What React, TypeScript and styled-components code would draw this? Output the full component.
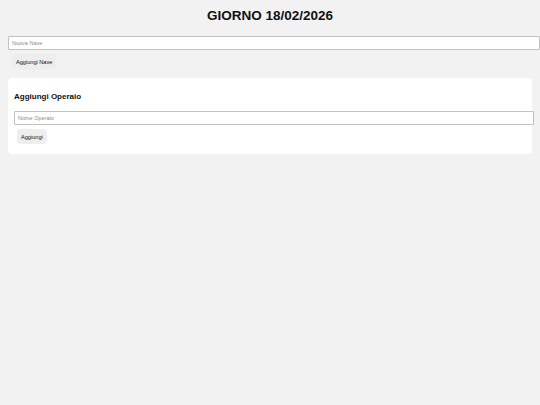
import React, { useState } from 'react';
import styled, { createGlobalStyle } from 'styled-components';

const GlobalStyle = createGlobalStyle`
  html, body {
    margin: 0;
    background: #f2f2f2;
  }
  body {
    padding: 8px;
    font-family: 'Liberation Sans', Arial, sans-serif;
    color: #111;
  }
`;

const Page = styled.div`
  display: flex;
  flex-direction: column;
  align-items: flex-start;
`;

const Title = styled.h1`
  align-self: stretch;
  margin: 0 0 12px;
  font-size: 13.5px;
  line-height: 16px;
  font-weight: 700;
  text-align: center;
`;

const TextInput = styled.input`
  display: block;
  width: 100%;
  height: 6px;
  padding: 3px;
  margin: 0;
  border: 1px solid #c2c2c2;
  border-radius: 1px;
  background: #fff;
  font-family: inherit;
  font-size: 5.5px;
  color: #111;
  outline: none;
  &::placeholder {
    color: #8a8a8a;
  }
`;

const ActionButton = styled.button<{ $indent?: number }>`
  margin: 4px 0 4px ${(p) => p.$indent ?? 3}px;
  padding: 0 4px;
  height: 15px;
  border: none;
  border-radius: 4px;
  background: #eeeeee;
  font-family: inherit;
  font-size: 5.6px;
  color: #111;
  cursor: pointer;
`;

const Card = styled.section`
  align-self: stretch;
  margin-top: 5px;
  padding: 6px;
  background: #fff;
  border-radius: 4px;
  display: flex;
  flex-direction: column;
  align-items: flex-start;
`;

const CardTitle = styled.h3`
  margin: 8px 0 9px;
  font-size: 8px;
  line-height: 10px;
  font-weight: 700;
`;

export default function App() {
  const [nave, setNave] = useState('');
  const [operaio, setOperaio] = useState('');

  return (
    <Page>
      <GlobalStyle />
      <Title>GIORNO 18/02/2026</Title>
      <TextInput
        placeholder="Nuova Nave"
        value={nave}
        onChange={(e) => setNave(e.target.value)}
      />
      <ActionButton $indent={4}>Aggiungi Nave</ActionButton>

      <Card>
        <CardTitle>Aggiungi Operaio</CardTitle>
        <TextInput
          placeholder="Nome Operaio"
          value={operaio}
          onChange={(e) => setOperaio(e.target.value)}
        />
        <ActionButton>Aggiungi</ActionButton>
      </Card>
    </Page>
  );
}
